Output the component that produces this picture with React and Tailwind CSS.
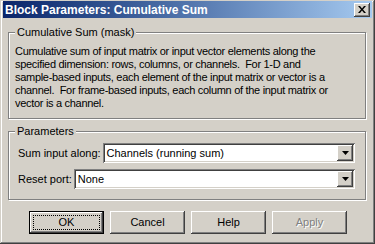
import React from "react";

const raised =
  "bg-[#d4d0c8] shadow-[inset_-1px_-1px_0_#404040,inset_1px_1px_0_#ffffff,inset_-2px_-2px_0_#808080,inset_2px_2px_0_#d4d0c8]";
const sunken =
  "bg-white shadow-[inset_1px_1px_0_#808080,inset_-1px_-1px_0_#ffffff,inset_2px_2px_0_#404040,inset_-2px_-2px_0_#d4d0c8]";

function GroupBox({ title, className = "", children }) {
  return (
    <div
      className={`relative border border-[#808080] shadow-[1px_1px_0_#ffffff,inset_1px_1px_0_#ffffff] ${className}`}
    >
      <span className="absolute -top-[8px] left-[6px] bg-[#d4d0c8] px-[2px] leading-[14px]">{title}</span>
      {children}
    </div>
  );
}

function Combo({ value, className = "" }) {
  return (
    <div className={`flex h-[20px] items-center ${sunken} p-[2px] ${className}`}>
      <span className="flex-1 pl-[2px] leading-[14px]">{value}</span>
      <span className={`flex h-[16px] w-[16px] items-center justify-center ${raised}`}>
        <svg width="7" height="4" viewBox="0 0 7 4">
          <path d="M0 0h7L3.5 4z" fill="#000" />
        </svg>
      </span>
    </div>
  );
}

function Button({ children, def, disabled }) {
  if (def) {
    return (
      <div className="flex h-[23px] w-[75px] border border-black">
        <div className={`flex flex-1 p-[3px] ${raised}`}>
          <div className="flex flex-1 items-center justify-center border border-dotted border-black">{children}</div>
        </div>
      </div>
    );
  }
  return (
    <div
      className={`flex h-[23px] w-[75px] items-center justify-center ${raised} ${
        disabled ? "text-[#808080] [text-shadow:1px_1px_0_#ffffff]" : ""
      }`}
    >
      {children}
    </div>
  );
}

export default function App() {
  return (
    <div className="h-[244px] w-[375px] bg-[#d4d0c8] font-['Liberation_Sans',Arial,sans-serif] text-[11px] text-black shadow-[inset_-1px_-1px_0_#404040,inset_1px_1px_0_#d4d0c8,inset_-2px_-2px_0_#808080,inset_2px_2px_0_#ffffff] px-[3px] pt-[1px]">
      <div className="flex h-[17px] items-center justify-between bg-gradient-to-r from-[#0a246a] to-[#a6caf0] pl-[2px] pr-[2px]">
        <span className="text-[12px] font-bold text-white">Block Parameters: Cumulative Sum</span>
        <span className={`flex h-[14px] w-[16px] items-center justify-center ${raised}`}>
          <svg width="8" height="7" viewBox="0 0 8 7">
            <path d="M0 0h2l2 2.5L6 0h2L5 3.5 8 7H6L4 4.5 2 7H0l3-3.5z" fill="#000" />
          </svg>
        </span>
      </div>

      <div className="flex flex-col pl-[5px] pr-[6px] pt-[14px]">
        <GroupBox title="Cumulative Sum (mask)" className="h-[87px] pl-[6px] pt-[12px]">
          <p className="leading-[13px] tracking-[-0.3px]">
            Cumulative sum of input matrix or input vector elements along the
            <br />
            specified dimension: rows, columns, or channels.&nbsp; For 1-D and
            <br />
            sample-based inputs, each element of the input matrix or vector is a
            <br />
            channel.&nbsp; For frame-based inputs, each column of the input matrix or
            <br />
            vector is a channel.
          </p>
        </GroupBox>

        <GroupBox title="Parameters" className="mt-[12px] h-[69px] pl-[9px] pr-[10px] pt-[11px]">
          <div className="flex items-center gap-[2px]">
            <span className="leading-[14px]">Sum input along:</span>
            <Combo value="Channels (running sum)" className="flex-1" />
          </div>
          <div className="mt-[6px] flex items-center gap-[2px]">
            <span className="leading-[14px]">Reset port:</span>
            <Combo value="None" className="flex-1" />
          </div>
        </GroupBox>

        <div className="mt-[11px] flex gap-[6px] pl-[21px]">
          <Button def>OK</Button>
          <Button>Cancel</Button>
          <Button>Help</Button>
          <Button disabled>Apply</Button>
        </div>
      </div>
    </div>
  );
}
